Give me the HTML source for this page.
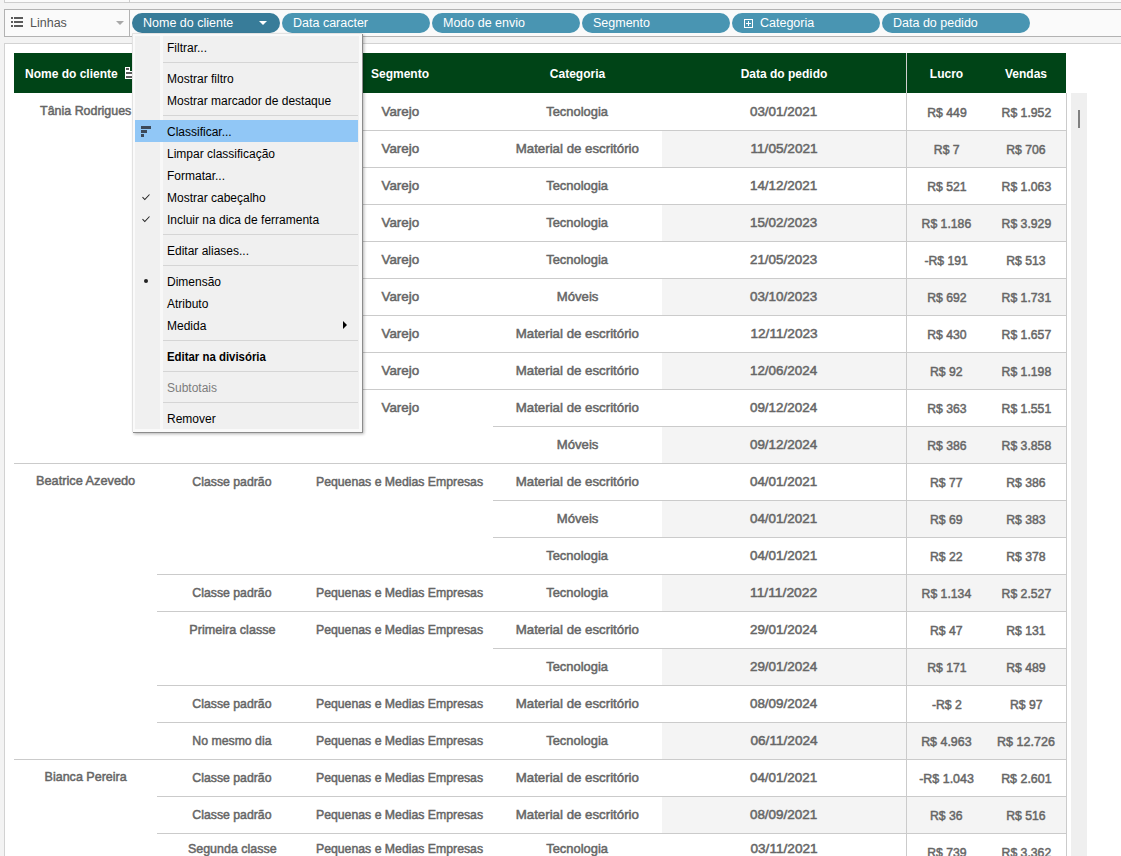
<!DOCTYPE html><html><head><meta charset="utf-8"><style>
*{margin:0;padding:0;box-sizing:border-box}
html,body{width:1121px;height:856px;overflow:hidden;background:#f3f3f3;font-family:"Liberation Sans",sans-serif}
.abs{position:absolute}
.t{position:absolute;white-space:nowrap;text-align:center;color:#666;font-size:13px;-webkit-text-stroke:0.5px #666}
.sx{display:inline-block}
.n{position:absolute;white-space:nowrap;text-align:center;color:#666;font-size:13px;-webkit-text-stroke:0.5px #666}
.hl{position:absolute;height:1px;background:#cbcbcb}
.pill{position:absolute;top:13px;height:20px;width:148px;border-radius:10px;background:#4a96b3;color:#fff;font-size:12.5px;line-height:20px;white-space:nowrap}
.mi{position:absolute;left:167px;font-size:12px;color:#000;white-space:nowrap;line-height:14px}
.ms{position:absolute;left:163px;width:195px;height:1px;background:#d5d5d5}
</style></head><body>

<div class="abs" style="left:4px;top:-1px;width:1130px;height:4px;background:#fafafa;border:1px solid #cdcdcd"></div>
<div class="abs" style="left:129px;top:0;width:1px;height:3px;background:#cdcdcd"></div>
<div class="abs" style="left:4px;top:9px;width:1130px;height:28px;background:#fafafa;border:1px solid #b2b2b2"></div>
<div class="abs" style="left:129px;top:9px;width:1px;height:28px;background:#b2b2b2"></div>
<div class="abs" style="left:11px;top:17px;width:2px;height:2px;background:#5a5a5a"></div>
<div class="abs" style="left:14px;top:17px;width:9px;height:2px;background:#5a5a5a"></div>
<div class="abs" style="left:11px;top:21px;width:2px;height:2px;background:#5a5a5a"></div>
<div class="abs" style="left:14px;top:21px;width:9px;height:2px;background:#5a5a5a"></div>
<div class="abs" style="left:11px;top:25px;width:2px;height:2px;background:#5a5a5a"></div>
<div class="abs" style="left:14px;top:25px;width:9px;height:2px;background:#5a5a5a"></div>
<div class="abs" style="left:30px;top:15px;font-size:12.5px;color:#555;line-height:16px">Linhas</div>
<div class="abs" style="left:116px;top:21px;width:0;height:0;border-left:4px solid transparent;border-right:4px solid transparent;border-top:4px solid #a8a8a8"></div>
<div class="pill" style="left:132px;background:#387c99"><span class="abs" style="left:11px;top:0">Nome do cliente</span></div>
<div class="pill" style="left:282px;background:#4995b2"><span class="abs" style="left:11px;top:0">Data caracter</span></div>
<div class="pill" style="left:432px;background:#4995b2"><span class="abs" style="left:11px;top:0">Modo de envio</span></div>
<div class="pill" style="left:582px;background:#4995b2"><span class="abs" style="left:11px;top:0">Segmento</span></div>
<div class="pill" style="left:732px;background:#4995b2"><span class="abs" style="left:12px;top:6px;width:9px;height:9px;border:1px solid #fff"></span><span class="abs" style="left:14px;top:10px;width:5px;height:1px;background:#fff"></span><span class="abs" style="left:16px;top:8px;width:1px;height:5px;background:#fff"></span><span class="abs" style="left:28px;top:0">Categoria</span></div>
<div class="pill" style="left:882px;background:#4995b2"><span class="abs" style="left:11px;top:0">Data do pedido</span></div>
<div class="abs" style="left:259px;top:21px;width:0;height:0;border-left:4px solid transparent;border-right:4px solid transparent;border-top:4px solid #fff"></div>
<div class="abs" style="left:4px;top:43px;width:1130px;height:830px;background:#fff;border:1px solid #d2d2d2"></div>
<div class="abs" style="left:14px;top:53px;width:1052px;height:40px;background:#004417"></div>
<div class="abs" style="left:906px;top:53px;width:1px;height:40px;background:#d0d0d0"></div>
<div class="abs" style="left:25px;top:54px;line-height:40px;color:#fff;font-weight:bold;font-size:12px;white-space:nowrap">Nome do cliente</div>
<div class="abs" style="left:307px;top:54px;width:186px;text-align:center;line-height:40px;color:#fff;font-weight:bold;font-size:12px;white-space:nowrap">Segmento</div>
<div class="abs" style="left:493px;top:54px;width:169px;text-align:center;line-height:40px;color:#fff;font-weight:bold;font-size:12px;white-space:nowrap">Categoria</div>
<div class="abs" style="left:662px;top:54px;width:244px;text-align:center;line-height:40px;color:#fff;font-weight:bold;font-size:12px;white-space:nowrap">Data do pedido</div>
<div class="abs" style="left:907px;top:54px;width:79px;text-align:center;line-height:40px;color:#fff;font-weight:bold;font-size:12px;white-space:nowrap">Lucro</div>
<div class="abs" style="left:986px;top:54px;width:80px;text-align:center;line-height:40px;color:#fff;font-weight:bold;font-size:12px;white-space:nowrap">Vendas</div>
<div class="abs" style="left:125px;top:67px;width:5px;height:4px;background:#fff"></div>
<div class="abs" style="left:125px;top:71px;width:10px;height:8px;background:#fff"></div>
<div class="abs" style="left:126px;top:68px;width:3px;height:2px;background:#5a5a5a"></div>
<div class="abs" style="left:126px;top:72px;width:8px;height:2px;background:#5a5a5a"></div>
<div class="abs" style="left:126px;top:76px;width:8px;height:2px;background:#5a5a5a"></div>
<div class="abs" style="left:662px;top:131px;width:404px;height:36px;background:#f4f4f4"></div>
<div class="abs" style="left:662px;top:205px;width:404px;height:36px;background:#f4f4f4"></div>
<div class="abs" style="left:662px;top:279px;width:404px;height:36px;background:#f4f4f4"></div>
<div class="abs" style="left:662px;top:353px;width:404px;height:36px;background:#f4f4f4"></div>
<div class="abs" style="left:662px;top:427px;width:404px;height:36px;background:#f4f4f4"></div>
<div class="abs" style="left:662px;top:501px;width:404px;height:36px;background:#f4f4f4"></div>
<div class="abs" style="left:662px;top:575px;width:404px;height:36px;background:#f4f4f4"></div>
<div class="abs" style="left:662px;top:649px;width:404px;height:36px;background:#f4f4f4"></div>
<div class="abs" style="left:662px;top:723px;width:404px;height:36px;background:#f4f4f4"></div>
<div class="abs" style="left:662px;top:797px;width:404px;height:36px;background:#f4f4f4"></div>
<div class="hl" style="left:157px;top:130px;width:909px"></div>
<div class="hl" style="left:157px;top:167px;width:909px"></div>
<div class="hl" style="left:157px;top:204px;width:909px"></div>
<div class="hl" style="left:157px;top:241px;width:909px"></div>
<div class="hl" style="left:157px;top:278px;width:909px"></div>
<div class="hl" style="left:157px;top:315px;width:909px"></div>
<div class="hl" style="left:157px;top:352px;width:909px"></div>
<div class="hl" style="left:157px;top:389px;width:909px"></div>
<div class="hl" style="left:493px;top:426px;width:573px"></div>
<div class="hl" style="left:14px;top:463px;width:1052px"></div>
<div class="hl" style="left:493px;top:500px;width:573px"></div>
<div class="hl" style="left:493px;top:537px;width:573px"></div>
<div class="hl" style="left:157px;top:574px;width:909px"></div>
<div class="hl" style="left:157px;top:611px;width:909px"></div>
<div class="hl" style="left:493px;top:648px;width:573px"></div>
<div class="hl" style="left:157px;top:685px;width:909px"></div>
<div class="hl" style="left:157px;top:722px;width:909px"></div>
<div class="hl" style="left:14px;top:759px;width:1052px"></div>
<div class="hl" style="left:157px;top:796px;width:909px"></div>
<div class="hl" style="left:157px;top:833px;width:909px"></div>
<div class="abs" style="left:906px;top:93px;width:1px;height:800px;background:#cbcbcb"></div>
<div class="abs" style="left:1066px;top:93px;width:1px;height:800px;background:#cbcbcb"></div>
<div class="t" style="left:14px;top:92px;width:143px;line-height:37px"><span class="sx" style="transform:scaleX(0.956)">Tânia Rodrigues</span></div>
<div class="t" style="left:307px;top:93px;width:186px;line-height:37px"><span class="sx" style="transform:scaleX(1.029)">Varejo</span></div>
<div class="t" style="left:493px;top:93px;width:169px;line-height:37px"><span class="sx" style="transform:scaleX(0.993)">Tecnologia</span></div>
<div class="n" style="left:662px;top:93px;width:244px;line-height:37px"><span class="sx" style="transform:scaleX(1.033)">03/01/2021</span></div>
<div class="n" style="left:907px;top:94px;width:79px;line-height:37px"><span class="sx" style="transform:scaleX(0.942)">R$ 449</span></div>
<div class="n" style="left:986px;top:94px;width:80px;line-height:37px"><span class="sx" style="transform:scaleX(0.940)">R$ 1.952</span></div>
<div class="t" style="left:307px;top:130px;width:186px;line-height:37px"><span class="sx" style="transform:scaleX(1.029)">Varejo</span></div>
<div class="t" style="left:493px;top:130px;width:169px;line-height:37px"><span class="sx" style="transform:scaleX(1.021)">Material de escritório</span></div>
<div class="n" style="left:662px;top:130px;width:244px;line-height:37px"><span class="sx" style="transform:scaleX(1.048)">11/05/2021</span></div>
<div class="n" style="left:907px;top:131px;width:79px;line-height:37px"><span class="sx" style="transform:scaleX(0.940)">R$ 7</span></div>
<div class="n" style="left:986px;top:131px;width:80px;line-height:37px"><span class="sx" style="transform:scaleX(0.940)">R$ 706</span></div>
<div class="t" style="left:307px;top:167px;width:186px;line-height:37px"><span class="sx" style="transform:scaleX(1.029)">Varejo</span></div>
<div class="t" style="left:493px;top:167px;width:169px;line-height:37px"><span class="sx" style="transform:scaleX(0.993)">Tecnologia</span></div>
<div class="n" style="left:662px;top:167px;width:244px;line-height:37px"><span class="sx" style="transform:scaleX(1.033)">14/12/2021</span></div>
<div class="n" style="left:907px;top:168px;width:79px;line-height:37px"><span class="sx" style="transform:scaleX(0.940)">R$ 521</span></div>
<div class="n" style="left:986px;top:168px;width:80px;line-height:37px"><span class="sx" style="transform:scaleX(0.940)">R$ 1.063</span></div>
<div class="t" style="left:307px;top:204px;width:186px;line-height:37px"><span class="sx" style="transform:scaleX(1.029)">Varejo</span></div>
<div class="t" style="left:493px;top:204px;width:169px;line-height:37px"><span class="sx" style="transform:scaleX(0.993)">Tecnologia</span></div>
<div class="n" style="left:662px;top:204px;width:244px;line-height:37px"><span class="sx" style="transform:scaleX(1.033)">15/02/2023</span></div>
<div class="n" style="left:907px;top:205px;width:79px;line-height:37px"><span class="sx" style="transform:scaleX(0.940)">R$ 1.186</span></div>
<div class="n" style="left:986px;top:205px;width:80px;line-height:37px"><span class="sx" style="transform:scaleX(0.940)">R$ 3.929</span></div>
<div class="t" style="left:307px;top:241px;width:186px;line-height:37px"><span class="sx" style="transform:scaleX(1.029)">Varejo</span></div>
<div class="t" style="left:493px;top:241px;width:169px;line-height:37px"><span class="sx" style="transform:scaleX(0.993)">Tecnologia</span></div>
<div class="n" style="left:662px;top:241px;width:244px;line-height:37px"><span class="sx" style="transform:scaleX(1.033)">21/05/2023</span></div>
<div class="n" style="left:907px;top:242px;width:79px;line-height:37px"><span class="sx" style="transform:scaleX(0.940)">-R$ 191</span></div>
<div class="n" style="left:986px;top:242px;width:80px;line-height:37px"><span class="sx" style="transform:scaleX(0.940)">R$ 513</span></div>
<div class="t" style="left:307px;top:278px;width:186px;line-height:37px"><span class="sx" style="transform:scaleX(1.029)">Varejo</span></div>
<div class="t" style="left:493px;top:278px;width:169px;line-height:37px"><span class="sx" style="transform:scaleX(1.010)">Móveis</span></div>
<div class="n" style="left:662px;top:278px;width:244px;line-height:37px"><span class="sx" style="transform:scaleX(1.033)">03/10/2023</span></div>
<div class="n" style="left:907px;top:279px;width:79px;line-height:37px"><span class="sx" style="transform:scaleX(0.940)">R$ 692</span></div>
<div class="n" style="left:986px;top:279px;width:80px;line-height:37px"><span class="sx" style="transform:scaleX(0.940)">R$ 1.731</span></div>
<div class="t" style="left:307px;top:315px;width:186px;line-height:37px"><span class="sx" style="transform:scaleX(1.029)">Varejo</span></div>
<div class="t" style="left:493px;top:315px;width:169px;line-height:37px"><span class="sx" style="transform:scaleX(1.021)">Material de escritório</span></div>
<div class="n" style="left:662px;top:315px;width:244px;line-height:37px"><span class="sx" style="transform:scaleX(1.048)">12/11/2023</span></div>
<div class="n" style="left:907px;top:316px;width:79px;line-height:37px"><span class="sx" style="transform:scaleX(0.940)">R$ 430</span></div>
<div class="n" style="left:986px;top:316px;width:80px;line-height:37px"><span class="sx" style="transform:scaleX(0.940)">R$ 1.657</span></div>
<div class="t" style="left:307px;top:352px;width:186px;line-height:37px"><span class="sx" style="transform:scaleX(1.029)">Varejo</span></div>
<div class="t" style="left:493px;top:352px;width:169px;line-height:37px"><span class="sx" style="transform:scaleX(1.021)">Material de escritório</span></div>
<div class="n" style="left:662px;top:352px;width:244px;line-height:37px"><span class="sx" style="transform:scaleX(1.033)">12/06/2024</span></div>
<div class="n" style="left:907px;top:353px;width:79px;line-height:37px"><span class="sx" style="transform:scaleX(0.940)">R$ 92</span></div>
<div class="n" style="left:986px;top:353px;width:80px;line-height:37px"><span class="sx" style="transform:scaleX(0.940)">R$ 1.198</span></div>
<div class="t" style="left:307px;top:389px;width:186px;line-height:37px"><span class="sx" style="transform:scaleX(1.029)">Varejo</span></div>
<div class="t" style="left:493px;top:389px;width:169px;line-height:37px"><span class="sx" style="transform:scaleX(1.021)">Material de escritório</span></div>
<div class="n" style="left:662px;top:389px;width:244px;line-height:37px"><span class="sx" style="transform:scaleX(1.033)">09/12/2024</span></div>
<div class="n" style="left:907px;top:390px;width:79px;line-height:37px"><span class="sx" style="transform:scaleX(0.940)">R$ 363</span></div>
<div class="n" style="left:986px;top:390px;width:80px;line-height:37px"><span class="sx" style="transform:scaleX(0.940)">R$ 1.551</span></div>
<div class="t" style="left:493px;top:426px;width:169px;line-height:37px"><span class="sx" style="transform:scaleX(1.010)">Móveis</span></div>
<div class="n" style="left:662px;top:426px;width:244px;line-height:37px"><span class="sx" style="transform:scaleX(1.033)">09/12/2024</span></div>
<div class="n" style="left:907px;top:427px;width:79px;line-height:37px"><span class="sx" style="transform:scaleX(0.940)">R$ 386</span></div>
<div class="n" style="left:986px;top:427px;width:80px;line-height:37px"><span class="sx" style="transform:scaleX(0.940)">R$ 3.858</span></div>
<div class="t" style="left:14px;top:462px;width:143px;line-height:37px"><span class="sx" style="transform:scaleX(0.980)">Beatrice Azevedo</span></div>
<div class="t" style="left:157px;top:463px;width:150px;line-height:37px"><span class="sx" style="transform:scaleX(0.945)">Classe padrão</span></div>
<div class="t" style="left:307px;top:463px;width:186px;line-height:37px"><span class="sx" style="transform:scaleX(0.944)">Pequenas e Medias Empresas</span></div>
<div class="t" style="left:493px;top:463px;width:169px;line-height:37px"><span class="sx" style="transform:scaleX(1.021)">Material de escritório</span></div>
<div class="n" style="left:662px;top:463px;width:244px;line-height:37px"><span class="sx" style="transform:scaleX(1.033)">04/01/2021</span></div>
<div class="n" style="left:907px;top:464px;width:79px;line-height:37px"><span class="sx" style="transform:scaleX(0.940)">R$ 77</span></div>
<div class="n" style="left:986px;top:464px;width:80px;line-height:37px"><span class="sx" style="transform:scaleX(0.940)">R$ 386</span></div>
<div class="t" style="left:493px;top:500px;width:169px;line-height:37px"><span class="sx" style="transform:scaleX(1.010)">Móveis</span></div>
<div class="n" style="left:662px;top:500px;width:244px;line-height:37px"><span class="sx" style="transform:scaleX(1.033)">04/01/2021</span></div>
<div class="n" style="left:907px;top:501px;width:79px;line-height:37px"><span class="sx" style="transform:scaleX(0.940)">R$ 69</span></div>
<div class="n" style="left:986px;top:501px;width:80px;line-height:37px"><span class="sx" style="transform:scaleX(0.940)">R$ 383</span></div>
<div class="t" style="left:493px;top:537px;width:169px;line-height:37px"><span class="sx" style="transform:scaleX(0.993)">Tecnologia</span></div>
<div class="n" style="left:662px;top:537px;width:244px;line-height:37px"><span class="sx" style="transform:scaleX(1.033)">04/01/2021</span></div>
<div class="n" style="left:907px;top:538px;width:79px;line-height:37px"><span class="sx" style="transform:scaleX(0.940)">R$ 22</span></div>
<div class="n" style="left:986px;top:538px;width:80px;line-height:37px"><span class="sx" style="transform:scaleX(0.940)">R$ 378</span></div>
<div class="t" style="left:157px;top:574px;width:150px;line-height:37px"><span class="sx" style="transform:scaleX(0.945)">Classe padrão</span></div>
<div class="t" style="left:307px;top:574px;width:186px;line-height:37px"><span class="sx" style="transform:scaleX(0.944)">Pequenas e Medias Empresas</span></div>
<div class="t" style="left:493px;top:574px;width:169px;line-height:37px"><span class="sx" style="transform:scaleX(0.993)">Tecnologia</span></div>
<div class="n" style="left:662px;top:574px;width:244px;line-height:37px"><span class="sx" style="transform:scaleX(1.064)">11/11/2022</span></div>
<div class="n" style="left:907px;top:575px;width:79px;line-height:37px"><span class="sx" style="transform:scaleX(0.940)">R$ 1.134</span></div>
<div class="n" style="left:986px;top:575px;width:80px;line-height:37px"><span class="sx" style="transform:scaleX(0.940)">R$ 2.527</span></div>
<div class="t" style="left:157px;top:611px;width:150px;line-height:37px"><span class="sx" style="transform:scaleX(0.970)">Primeira classe</span></div>
<div class="t" style="left:307px;top:611px;width:186px;line-height:37px"><span class="sx" style="transform:scaleX(0.944)">Pequenas e Medias Empresas</span></div>
<div class="t" style="left:493px;top:611px;width:169px;line-height:37px"><span class="sx" style="transform:scaleX(1.021)">Material de escritório</span></div>
<div class="n" style="left:662px;top:611px;width:244px;line-height:37px"><span class="sx" style="transform:scaleX(1.033)">29/01/2024</span></div>
<div class="n" style="left:907px;top:612px;width:79px;line-height:37px"><span class="sx" style="transform:scaleX(0.940)">R$ 47</span></div>
<div class="n" style="left:986px;top:612px;width:80px;line-height:37px"><span class="sx" style="transform:scaleX(0.940)">R$ 131</span></div>
<div class="t" style="left:493px;top:648px;width:169px;line-height:37px"><span class="sx" style="transform:scaleX(0.993)">Tecnologia</span></div>
<div class="n" style="left:662px;top:648px;width:244px;line-height:37px"><span class="sx" style="transform:scaleX(1.033)">29/01/2024</span></div>
<div class="n" style="left:907px;top:649px;width:79px;line-height:37px"><span class="sx" style="transform:scaleX(0.940)">R$ 171</span></div>
<div class="n" style="left:986px;top:649px;width:80px;line-height:37px"><span class="sx" style="transform:scaleX(0.940)">R$ 489</span></div>
<div class="t" style="left:157px;top:685px;width:150px;line-height:37px"><span class="sx" style="transform:scaleX(0.945)">Classe padrão</span></div>
<div class="t" style="left:307px;top:685px;width:186px;line-height:37px"><span class="sx" style="transform:scaleX(0.944)">Pequenas e Medias Empresas</span></div>
<div class="t" style="left:493px;top:685px;width:169px;line-height:37px"><span class="sx" style="transform:scaleX(1.021)">Material de escritório</span></div>
<div class="n" style="left:662px;top:685px;width:244px;line-height:37px"><span class="sx" style="transform:scaleX(1.033)">08/09/2024</span></div>
<div class="n" style="left:907px;top:686px;width:79px;line-height:37px"><span class="sx" style="transform:scaleX(0.940)">-R$ 2</span></div>
<div class="n" style="left:986px;top:686px;width:80px;line-height:37px"><span class="sx" style="transform:scaleX(0.940)">R$ 97</span></div>
<div class="t" style="left:157px;top:722px;width:150px;line-height:37px"><span class="sx" style="transform:scaleX(0.945)">No mesmo dia</span></div>
<div class="t" style="left:307px;top:722px;width:186px;line-height:37px"><span class="sx" style="transform:scaleX(0.944)">Pequenas e Medias Empresas</span></div>
<div class="t" style="left:493px;top:722px;width:169px;line-height:37px"><span class="sx" style="transform:scaleX(0.993)">Tecnologia</span></div>
<div class="n" style="left:662px;top:722px;width:244px;line-height:37px"><span class="sx" style="transform:scaleX(1.048)">06/11/2024</span></div>
<div class="n" style="left:907px;top:723px;width:79px;line-height:37px"><span class="sx" style="transform:scaleX(0.957)">R$ 4.963</span></div>
<div class="n" style="left:986px;top:723px;width:80px;line-height:37px"><span class="sx" style="transform:scaleX(0.965)">R$ 12.726</span></div>
<div class="t" style="left:14px;top:758px;width:143px;line-height:37px"><span class="sx" style="transform:scaleX(0.964)">Bianca Pereira</span></div>
<div class="t" style="left:157px;top:759px;width:150px;line-height:37px"><span class="sx" style="transform:scaleX(0.945)">Classe padrão</span></div>
<div class="t" style="left:307px;top:759px;width:186px;line-height:37px"><span class="sx" style="transform:scaleX(0.944)">Pequenas e Medias Empresas</span></div>
<div class="t" style="left:493px;top:759px;width:169px;line-height:37px"><span class="sx" style="transform:scaleX(1.021)">Material de escritório</span></div>
<div class="n" style="left:662px;top:759px;width:244px;line-height:37px"><span class="sx" style="transform:scaleX(1.033)">04/01/2021</span></div>
<div class="n" style="left:907px;top:760px;width:79px;line-height:37px"><span class="sx" style="transform:scaleX(0.958)">-R$ 1.043</span></div>
<div class="n" style="left:986px;top:760px;width:80px;line-height:37px"><span class="sx" style="transform:scaleX(0.957)">R$ 2.601</span></div>
<div class="t" style="left:157px;top:796px;width:150px;line-height:37px"><span class="sx" style="transform:scaleX(0.945)">Classe padrão</span></div>
<div class="t" style="left:307px;top:796px;width:186px;line-height:37px"><span class="sx" style="transform:scaleX(0.944)">Pequenas e Medias Empresas</span></div>
<div class="t" style="left:493px;top:796px;width:169px;line-height:37px"><span class="sx" style="transform:scaleX(1.021)">Material de escritório</span></div>
<div class="n" style="left:662px;top:796px;width:244px;line-height:37px"><span class="sx" style="transform:scaleX(1.033)">08/09/2021</span></div>
<div class="n" style="left:907px;top:797px;width:79px;line-height:37px"><span class="sx" style="transform:scaleX(0.940)">R$ 36</span></div>
<div class="n" style="left:986px;top:797px;width:80px;line-height:37px"><span class="sx" style="transform:scaleX(0.940)">R$ 516</span></div>
<div class="t" style="left:157px;top:830px;width:150px;line-height:37px"><span class="sx" style="transform:scaleX(0.959)">Segunda classe</span></div>
<div class="t" style="left:307px;top:830px;width:186px;line-height:37px"><span class="sx" style="transform:scaleX(0.944)">Pequenas e Medias Empresas</span></div>
<div class="t" style="left:493px;top:830px;width:169px;line-height:37px"><span class="sx" style="transform:scaleX(0.993)">Tecnologia</span></div>
<div class="n" style="left:662px;top:830px;width:244px;line-height:37px"><span class="sx" style="transform:scaleX(1.048)">03/11/2021</span></div>
<div class="n" style="left:907px;top:834px;width:79px;line-height:37px"><span class="sx" style="transform:scaleX(0.940)">R$ 739</span></div>
<div class="n" style="left:986px;top:834px;width:80px;line-height:37px"><span class="sx" style="transform:scaleX(0.940)">R$ 3.362</span></div>
<div class="abs" style="left:1071px;top:93px;width:16px;height:800px;background:#efefef"></div>
<div class="abs" style="left:1078px;top:110px;width:2px;height:18px;background:#808080"></div>
<div class="abs" style="left:132px;top:33px;width:230px;height:399px;box-shadow:1px 1px 0 #8c8c8c,2px 2px 3px rgba(0,0,0,0.3);background:#fafafa;border-left:1px solid #e2e2e2;border-top:1px solid #e2e2e2"></div>
<div class="abs" style="left:135px;top:36px;width:224px;height:393px;background:#f0f0f0"></div>
<div class="abs" style="left:160px;top:36px;width:3px;height:393px;background:#f8f8f8"></div>
<div class="abs" style="left:135px;top:120px;width:223px;height:22px;background:#91c7f6"></div>
<div class="mi" style="top:41px;">Filtrar...</div>
<div class="ms" style="top:62px"></div>
<div class="mi" style="top:72px;">Mostrar filtro</div>
<div class="mi" style="top:94px;">Mostrar marcador de destaque</div>
<div class="ms" style="top:115px"></div>
<div class="mi" style="top:125px;">Classificar...</div>
<div class="mi" style="top:147px;">Limpar classificação</div>
<div class="mi" style="top:169px;">Formatar...</div>
<div class="mi" style="top:191px;">Mostrar cabeçalho</div>
<svg class="abs" style="left:141px;top:192px" width="10" height="10" viewBox="0 0 10 10"><path d="M1.5 5.2 L3.8 7.5 L8.5 2.5" fill="none" stroke="#222" stroke-width="1.05"/></svg>
<div class="mi" style="top:213px;">Incluir na dica de ferramenta</div>
<svg class="abs" style="left:141px;top:214px" width="10" height="10" viewBox="0 0 10 10"><path d="M1.5 5.2 L3.8 7.5 L8.5 2.5" fill="none" stroke="#222" stroke-width="1.05"/></svg>
<div class="ms" style="top:234px"></div>
<div class="mi" style="top:244px;">Editar aliases...</div>
<div class="ms" style="top:265px"></div>
<div class="mi" style="top:275px;">Dimensão</div>
<div class="abs" style="left:144px;top:279px;width:4px;height:4px;border-radius:2px;background:#222"></div>
<div class="mi" style="top:297px;">Atributo</div>
<div class="mi" style="top:319px;">Medida</div>
<div class="abs" style="left:343px;top:321px;width:0;height:0;border-top:4px solid transparent;border-bottom:4px solid transparent;border-left:4px solid #000"></div>
<div class="ms" style="top:340px"></div>
<div class="mi" style="top:350px;font-weight:bold;transform:scaleX(0.95);transform-origin:left;">Editar na divisória</div>
<div class="ms" style="top:371px"></div>
<div class="mi" style="top:381px;color:#7d7d7d;">Subtotais</div>
<div class="ms" style="top:402px"></div>
<div class="mi" style="top:412px;">Remover</div>
<div class="abs" style="left:141px;top:126px;width:10px;height:3px;background:#3d4a5a"></div>
<div class="abs" style="left:141px;top:130px;width:6px;height:3px;background:#3d4a5a"></div>
<div class="abs" style="left:141px;top:134px;width:3px;height:3px;background:#3d4a5a"></div>
</body></html>
